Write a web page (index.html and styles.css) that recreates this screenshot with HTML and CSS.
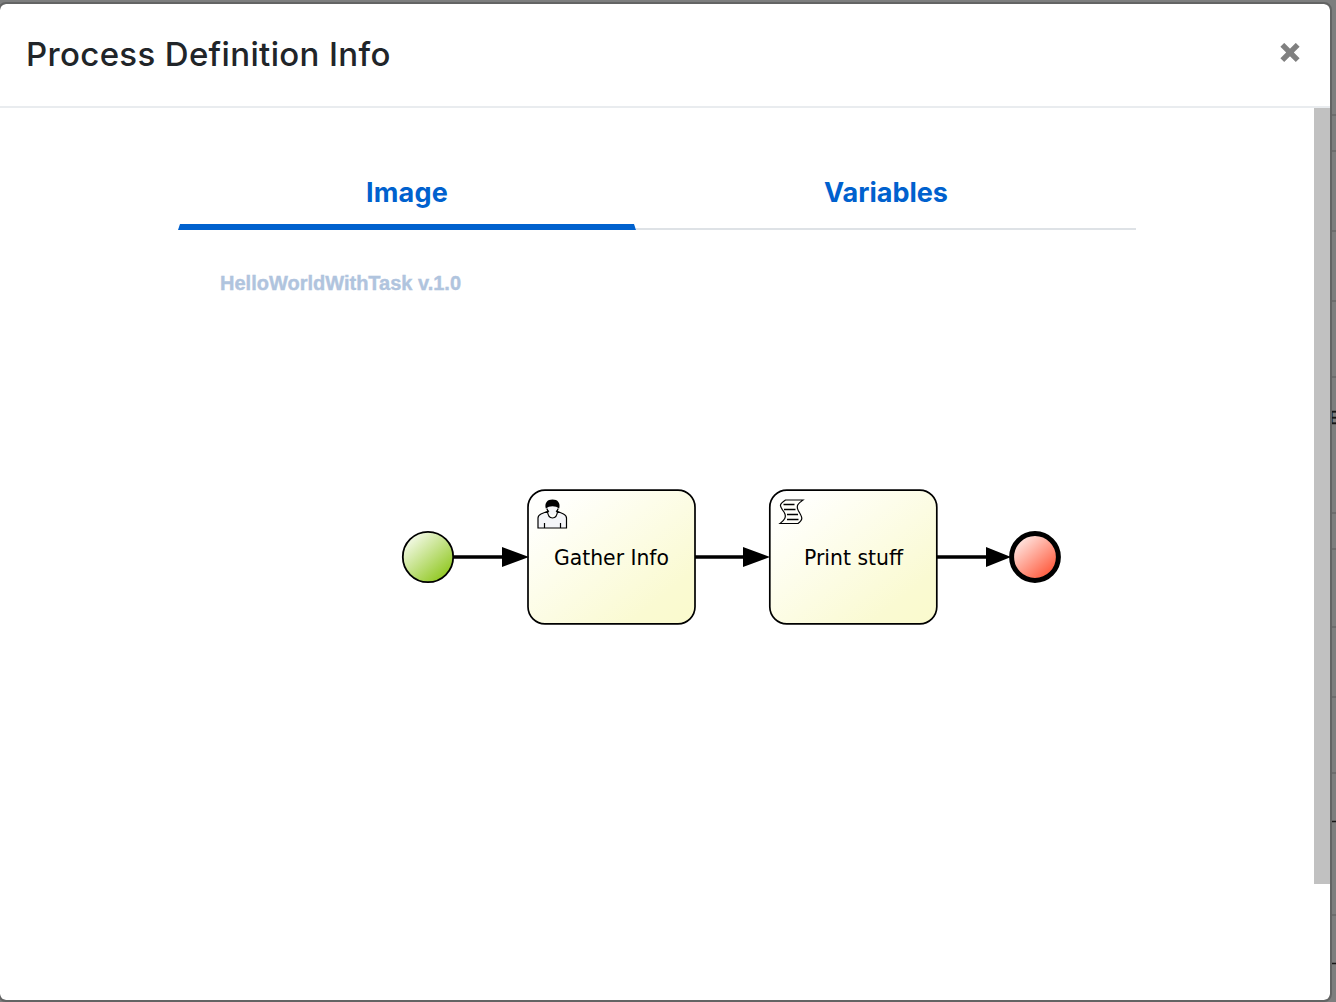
FILE: index.html
```html
<!DOCTYPE html>
<html lang="en">
<head>
<meta charset="utf-8">
<title>Process Definition Info</title>
<link rel="stylesheet" href="styles.css">
</head>
<body>
<svg class="backdrop" width="8" height="1002" viewBox="0 0 8 1002" aria-hidden="true">
  <path class="row-line" d="M0 115H8M0 151H8M0 231H8M0 301H8M0 377H8M0 513H8M0 549H8M0 627H8M0 697H8M0 773H8M0 915H8"/>
  <path class="row-line-dark" d="M3 821.5H8M3 963.5H8"/>
  <text class="backdrop-text" x="1" y="424">E</text>
</svg>
<section class="modal">
  <header class="modal-header">
    <h1 class="modal-title">Process Definition Info</h1>
    <button class="close" aria-label="Close"><svg width="20" height="20" viewBox="0 0 20 20"><path d="M2.3 1.8L17.7 17.2M17.7 1.8L2.3 17.2"/></svg></button>
  </header>
  <div class="modal-body">
    <div class="content">
      <nav class="tabs">
        <a class="tab active">Image</a>
        <a class="tab">Variables</a>
      </nav>
      <svg class="diagram" width="958" height="654" viewBox="178 230 958 654">
        <defs>
          <linearGradient id="task" x1="0" y1="0" x2="1" y2="1"><stop offset="0" stop-color="#fff"/><stop offset=".15" stop-color="#fffffb"/><stop offset=".8" stop-color="#fafad2"/><stop offset="1" stop-color="#fafacd"/></linearGradient>
          <linearGradient id="start" x1=".1" y1=".1" x2=".8" y2=".9"><stop offset="0" stop-color="#f8fcf0"/><stop offset="1" stop-color="#93c926"/></linearGradient>
          <linearGradient id="end" x1=".1" y1=".1" x2=".75" y2=".85"><stop offset="0" stop-color="#fff0ed"/><stop offset="1" stop-color="#ff6347"/></linearGradient>
        </defs>
        <text class="process-name" x="220" y="290" textLength="241">HelloWorldWithTask v.1.0</text>
        <circle cx="428" cy="557" r="25.2" fill="url(#start)" stroke="#000" stroke-width="1.8"/>
        <rect class="task" x="528" y="490.2" width="167" height="133.6" rx="17"/>
        <rect class="task" x="769.8" y="490.2" width="167" height="133.6" rx="17"/>
        <path class="flow" d="M454 557H504M695 557H745M936 557H988"/>
        <path d="M502 547L529 557L502 567ZM743 547L770 557L743 567ZM986 547L1011 557L986 567Z"/>
        <circle cx="1035" cy="557" r="23.4" fill="url(#end)" stroke="#000" stroke-width="5"/>
        <text class="task-label" x="554" y="565" textLength="115" lengthAdjust="spacingAndGlyphs">Gather Info</text>
        <text class="task-label" x="804" y="565" textLength="99" lengthAdjust="spacingAndGlyphs">Print stuff</text>
        <g class="icon">
          <path fill="#f4f5f8" d="M538 528V518Q538 515.5 541 514L547.5 511.3Q548 518 552.5 518T557.5 511.3L563.5 514Q566.5 515.5 566.5 518V528ZM544.5 528V523M560.5 528V523"/>
          <path fill="#f4f5f8" stroke="none" d="M547.5 506Q546 509.5 549 511.5Q549 515 552.5 515T556 511.5Q559 509.5 557.5 506Z"/>
          <path fill="none" d="M546.8 508.5Q547.5 511 549 511.8M558.2 508.5Q557.5 511 556 511.8"/>
          <path fill="#000" stroke="none" d="M545.8 508.5C544.3 503 547.3 499.6 552.5 499.6S560.7 503 559.2 508.5Q556.5 506.2 552.5 506.2T545.8 508.5Z"/>
        </g>
        <g class="icon">
          <path fill="#fffffa" d="M785.5 500H803C798.3 503.5 795.5 505.5 798.5 511C802.5 517.5 803.5 519.5 798 523.5H780C783.5 520.5 787.5 517.5 784 512C779.5 506 778.5 504.5 785.5 500Z"/>
          <path class="script-lines" d="M783.5 504.5H794.5M784 509.5H795.5M787 514.5H798M787 519.5H798.5"/>
        </g>
      </svg>
    </div>
    <div class="scrollbar"></div>
  </div>
</section>
</body>
</html>
```
FILE: styles.css
```css
* { box-sizing: border-box; }
body {
  margin: 0;
  width: 1336px;
  height: 1002px;
  overflow: hidden;
  background: #7d7e7e;
  font-family: Inter, "Liberation Sans", sans-serif;
}
.backdrop { position: absolute; left: 1328px; top: 0; }
.row-line { stroke: #6c6d6d; stroke-width: 2; }
.row-line-dark { stroke: #181818; stroke-width: 1.5; }
.backdrop-text { font: 500 19px "Liberation Sans", sans-serif; fill: #161616; stroke: #161616; stroke-width: .4; }
.modal {
  position: relative;
  display: flex;
  flex-direction: column;
  width: 1334px;
  height: 1000px;
  margin: 2px 0 0 -2px;
  border: 2px solid #636464;
  border-radius: 8px;
  background: #fff;
  background-clip: padding-box;
  overflow: hidden;
}
.modal-header {
  display: flex;
  justify-content: space-between;
  align-items: center;
  height: 104px;
  padding: 0 30px 4px 26px;
  border-bottom: 2px solid #e9ecef;
}
.modal-title {
  margin: 0;
  padding-top: 2px;
  font-size: 33px;
  font-weight: 500;
  line-height: 40px;
  letter-spacing: .34px;
  color: #212529;
}
.close { display: flex; padding: 0; border: 0; background: none; }
.close path { stroke: #808080; stroke-width: 5.4; }
.modal-body { display: flex; flex: 1; justify-content: space-between; }
.content { width: 958px; margin-left: 178px; padding-top: 48px; }
.tabs { display: flex; height: 74px; }
.tab {
  display: flex;
  flex: 1;
  justify-content: center;
  height: 74px;
  padding-top: 19px;
  border-bottom: 2px solid #dee2e6;
  font-size: 27px;
  font-weight: 650;
  line-height: 36px;
  color: #0061ce;
}
.tab.active {
  flex: 0 0 458px;
  border: 2px solid transparent;
  border-bottom: 6px solid #0061ce;
  padding-top: 17px;
  letter-spacing: .2px;
}
.diagram { display: block; }
.process-name { font: bold 20px "Liberation Sans", Arial, sans-serif; fill: #b0c4de; stroke: #b0c4de; stroke-width: .4; }
.task { fill: url(#task); stroke: #000; stroke-width: 1.7; }
.flow { stroke: #000; stroke-width: 3.4; }
.task-label { font: 20.5px "DejaVu Sans", sans-serif; fill: #000; }
.icon { stroke: #000; stroke-width: 1.2; }
.script-lines { fill: none; stroke-width: 1.7; }
.scrollbar { width: 16px; height: 776px; background: #c1c1c1; }
```
